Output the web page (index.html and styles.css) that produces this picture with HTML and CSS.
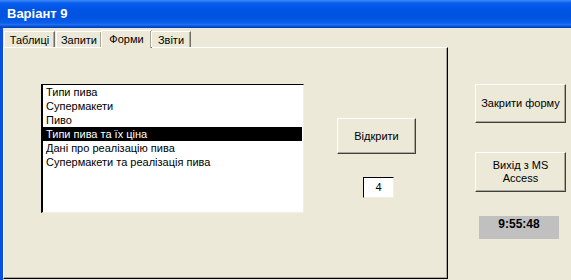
FILE: index.html
```html
<!DOCTYPE html>
<html lang="uk">
<head>
    <meta charset="UTF-8">
    <title>Варіант 9</title>
    <link rel="stylesheet" href="styles.css">
</head>
<body>
    <div class="window">
        <div class="titlebar">Варіант 9</div>

        <div class="client">
            <div class="tabs-area">
                <div class="tabs">
                    <div class="tab">Таблиці</div>
                    <div class="tab">Запити</div>
                    <div class="tab active">Форми</div>
                    <div class="tab">Звіти</div>
                </div>

                <div class="panel">
                    <div class="listbox">
                        <div class="item">Типи пива</div>
                        <div class="item">Супермакети</div>
                        <div class="item">Пиво</div>
                        <div class="item selected">Типи пива та їх ціна</div>
                        <div class="item">Дані про реалізацію пива</div>
                        <div class="item">Супермакети та реалізація пива</div>
                    </div>

                    <div class="open-col">
                        <button class="btn open-btn">Відкрити</button>
                        <div class="num-box">4</div>
                    </div>
                </div>
            </div>

            <div class="side">
                <button class="btn side-btn">Закрити форму</button>
                <button class="btn side-btn">Вихід з MS<br>Access</button>
                <div class="clock">9:55:48</div>
            </div>
        </div>
    </div>
</body>
</html>
```

FILE: styles.css
```css
* {
    margin: 0;
    padding: 0;
    box-sizing: border-box;
}

body {
    width: 571px;
    height: 280px;
    overflow: hidden;
    background: #ece9d8;
    font-family: "Liberation Sans", Arial, sans-serif;
    font-size: 11px;
    color: #000;
}

/* Window frame */
.window {
    height: 280px;
    border-left: 3px solid #0a4fe0;
    display: flex;
    flex-direction: column;
}

.titlebar {
    height: 28px;
    margin-left: -3px;
    padding: 6px 0 0 7px;
    color: #fff;
    font-size: 13px;
    font-weight: bold;
    background: linear-gradient(to bottom, #3f8cf3 0, #0a5ef0 3px, #0055e6 8px, #0053e0 60%, #0a5ee8 82%, #2070f0 88%, #0048d0 96%, #003bb0 100%);
}

.client {
    flex: 1;
    display: flex;
}

/* Tabs */
.tabs-area {
    width: 445px;
    display: flex;
    flex-direction: column;
    padding-top: 1px;
}

.tabs {
    height: 18px;
    display: flex;
    align-items: flex-end;
    padding-left: 1px;
    position: relative;
    z-index: 1;
}

.tab {
    height: 16px;
    padding-top: 1px;
    margin-right: 1px;
    border-top: 1px solid #fff;
    border-left: 1px solid #fff;
    border-right: 1px solid #716f64;
    box-shadow: inset -1px 0 #aca899;
    line-height: 14px;
    text-align: center;
    white-space: nowrap;
}

.tab:nth-child(1) { width: 51px; }
.tab:nth-child(2) { width: 46px; }
.tab:nth-child(4) { width: 40px; }

.tab.active {
    width: 51px;
    height: 18px;
    margin: 0 0 -1px -2px;
    padding-top: 1px;
    background: #ece9d8;
}

.tab.active + .tab {
    margin-left: -1px;
}

.panel {
    flex: 1;
    display: flex;
    align-items: flex-start;
    padding: 36px 0 0 37px;
    border-top: 1px solid #fff;
    border-left: 1px solid #fff;
    border-right: 1px solid #000;
    border-bottom: 1px solid #000;
    box-shadow: inset -1px -1px #aca899;
    margin-bottom: 1px;
}

/* List */
.listbox {
    width: 263px;
    height: 129px;
    background: #fff;
    border-top: 1px solid #000;
    border-left: 2px solid #000;
    border-right: 1px solid #f1efe2;
    border-bottom: 1px solid #f1efe2;
}

.item {
    height: 14px;
    line-height: 14px;
    padding-left: 3px;
    margin-right: 1px;
    white-space: nowrap;
}

.item.selected {
    background: #000;
    color: #fff;
}

/* Buttons */
.btn {
    font-family: "Liberation Sans", Arial, sans-serif;
    font-size: 11px;
    color: #000;
    background: #ece9d8;
    border-top: 1px solid #fff;
    border-left: 1px solid #fff;
    border-right: 1px solid #404040;
    border-bottom: 1px solid #404040;
    box-shadow: inset -1px -1px #aca899;
    line-height: 13px;
}

.open-col {
    display: flex;
    flex-direction: column;
    align-items: center;
    margin-left: 33px;
    padding-top: 34px;
}

.open-btn {
    width: 79px;
    height: 36px;
}

.num-box {
    width: 31px;
    height: 21px;
    margin-top: 23px;
    margin-left: 4px;
    background: #fff;
    border-top: 1px solid #000;
    border-left: 1px solid #000;
    border-right: 1px solid #f1efe2;
    border-bottom: 1px solid #f1efe2;
    text-align: center;
    line-height: 18px;
}

/* Right column */
.side {
    flex: 1;
    display: flex;
    flex-direction: column;
    align-items: flex-start;
    padding: 56px 0 0 27px;
}

.side-btn {
    width: 91px;
    height: 39px;
}

.side-btn + .side-btn {
    height: 40px;
    margin-top: 29px;
}

.clock {
    width: 80px;
    height: 23px;
    margin: 24px 0 0 4px;
    background: #c0c0c0;
    font-size: 12px;
    font-weight: bold;
    text-align: center;
    padding-top: 1px;
}
```
